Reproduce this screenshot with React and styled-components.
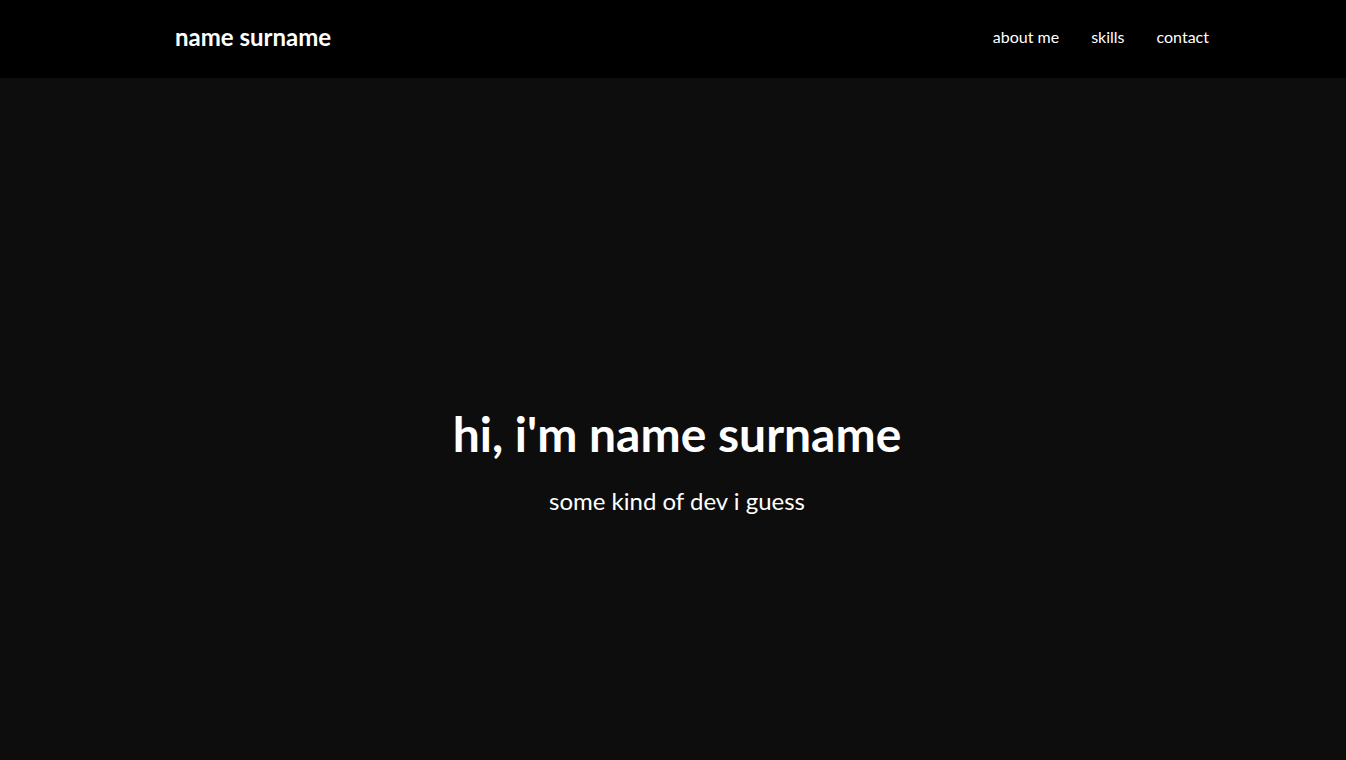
import React from 'react'
import styled, { createGlobalStyle } from 'styled-components'

const GlobalStyle = createGlobalStyle`
  * { box-sizing: border-box; }
  body {
    margin: 0;
    background: #0d0d0d;
    color: #fff;
    font-family: Lato, "Noto Sans", sans-serif;
  }
`

const Header = styled.header`
  background: #000;
  height: 78px;
  display: flex;
  align-items: center;
  justify-content: space-between;
  padding: 0 137px 5px 175px;
`

const Logo = styled.a`
  color: #fff;
  font-size: 24px;
  font-weight: 700;
  text-decoration: none;
`

const Nav = styled.nav`
  display: flex;
  gap: 32px;
`

const NavLink = styled.a`
  color: #fff;
  font-size: 16px;
  text-decoration: none;
  cursor: pointer;
`

const Hero = styled.section`
  min-height: 100vh;
  display: flex;
  flex-direction: column;
  align-items: center;
  justify-content: center;
  text-align: center;
  padding: 3px 0 0 8px;
`

const Title = styled.h1`
  margin: 0 0 24px;
  font-size: 48px;
  font-weight: 700;
`

const Subtitle = styled.p`
  margin: 0;
  font-size: 24px;
`

export default function App() {
  return (
    <>
      <GlobalStyle />
      <Header>
        <Logo href="#">name surname</Logo>
        <Nav>
          <NavLink href="#about">about me</NavLink>
          <NavLink href="#skills">skills</NavLink>
          <NavLink href="#contact">contact</NavLink>
        </Nav>
      </Header>
      <Hero>
        <Title>hi, i'm name surname</Title>
        <Subtitle>some kind of dev i guess</Subtitle>
      </Hero>
    </>
  )
}
